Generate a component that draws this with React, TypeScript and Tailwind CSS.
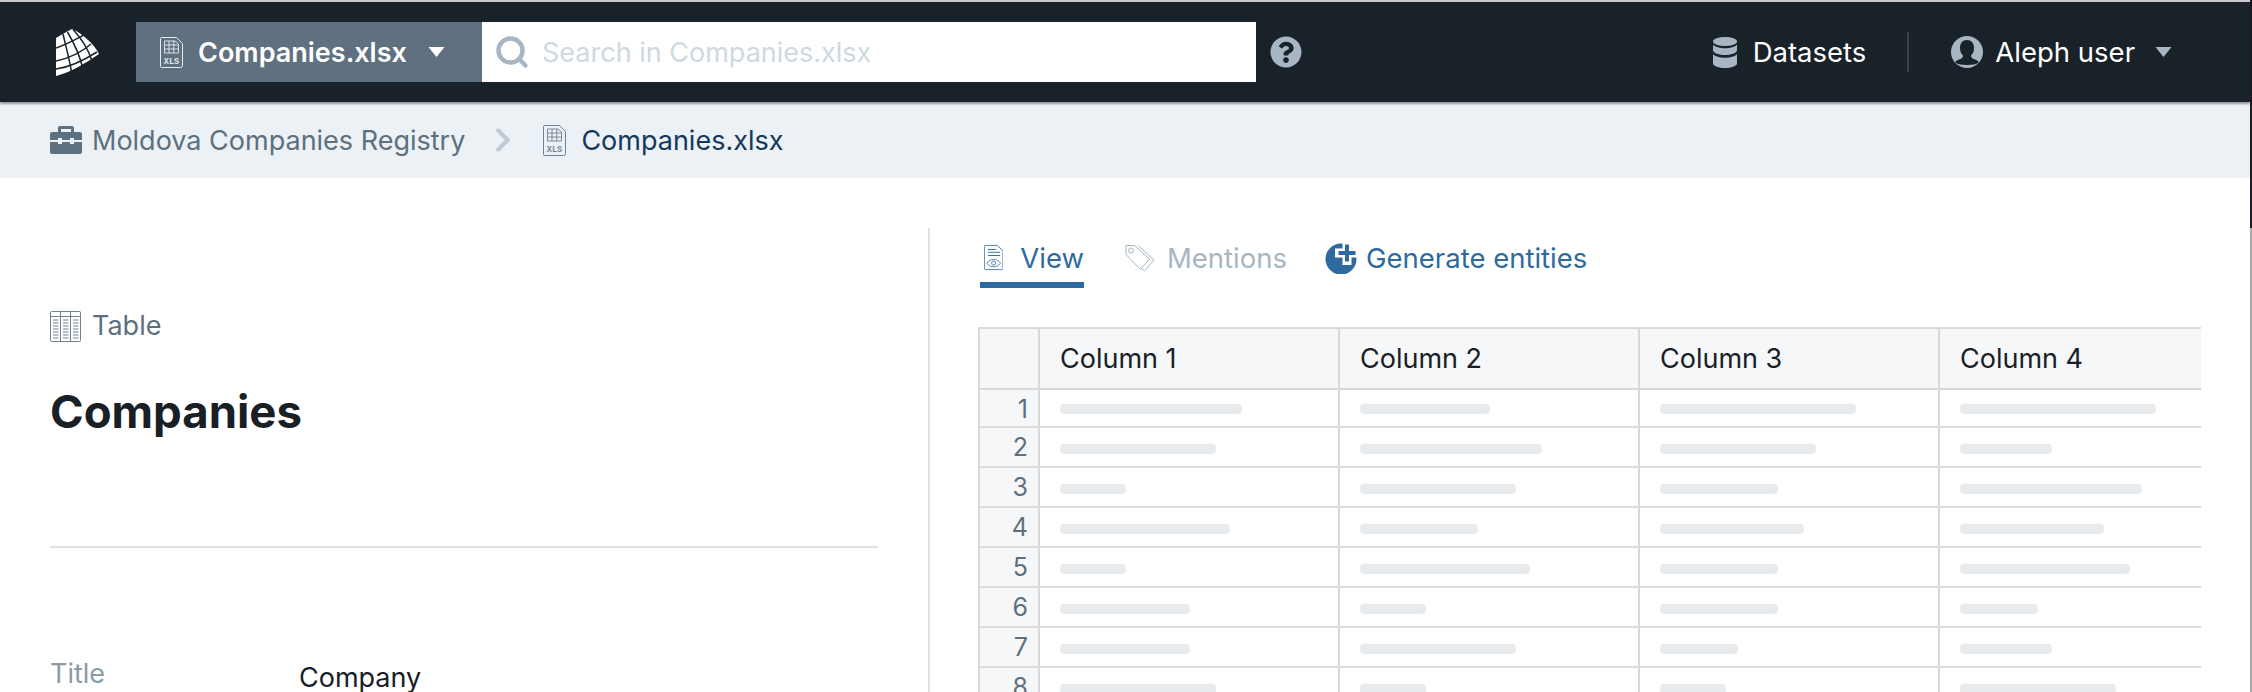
import { Search, ChevronRight } from "lucide-react";
import { FaQuestionCircle } from "react-icons/fa";

const columns = [
  { name: "Column 1", bars: [182, 156, 66, 170, 66, 130, 130, 156] },
  { name: "Column 2", bars: [130, 182, 156, 118, 170, 66, 156, 66] },
  { name: "Column 3", bars: [196, 156, 118, 144, 118, 118, 78, 66] },
  { name: "Column 4", bars: [196, 92, 182, 144, 170, 78, 92, 156] },
];

function XlsIcon({ className }: { className: string }) {
  return (
    <svg viewBox="0 0 23 31" className={className} fill="none" stroke="currentColor" strokeWidth="1">
      <path d="M1.500 0.500h15l6 6v22a2 2 0 0 1-2 2h-19a1 1 0 0 1-1-1v-28a1 1 0 0 1 1-1z" />
      <path d="M4.500 4h10.500l3.500 3v9h-14z M4.500 8h14 M4.500 12h14 M9 4v12 M13.750 4v12" strokeWidth="0.9" />
      <text x="11.500" y="27" textAnchor="middle" fontSize="8.500" fontWeight="700" stroke="none" fill="currentColor" className="[font-family:'Liberation_Mono',monospace]">
        XLS
      </text>
    </svg>
  );
}

function Logo() {
  return (
    <svg viewBox="0 0 43 47" className="w-[43px] h-[47px] text-white">
      <path d="M0 9 C5 6 10 3 16 0 C27 5 38 15 43 25 C30 34 15 43 0 47 Z" fill="currentColor" />
      <g fill="none" stroke="#1a2229" strokeWidth="1.500">
        <path d="M7 5 C10 18 14 32 16 46" />
        <path d="M11.500 3 C18 14 24 27 27 40" />
        <path d="M17 0.500 C25 9 32 19 36 32" />
        <path d="M0 19 C12 15 22 9 28 6" />
        <path d="M0 32 C14 29 27 22 35 15" />
        <path d="M0 40 C15 38 30 30 41 23" />
      </g>
    </svg>
  );
}

function DatabaseIcon() {
  return (
    <svg viewBox="0 0 24 31" className="w-6 h-[31px] text-[#a7b6c2]" fill="currentColor">
      <ellipse cx="12" cy="4.500" rx="12" ry="4.500" />
      <path d="M0 7.500c2 2.700 7 3.700 12 3.700s10-1 12-3.700v6c-1 2.800-6 4.500-12 4.500s-11-1.700-12-4.500z" />
      <path d="M0 17c2 2.700 7 3.700 12 3.700s10-1 12-3.700v9.500c0 2.700-6 4.500-12 4.500s-12-1.800-12-4.500z" />
    </svg>
  );
}

function UserIcon() {
  return (
    <svg viewBox="0 0 32 32" className="w-8 h-8">
      <circle cx="16" cy="16" r="16" fill="#a7b6c2" />
      <path d="M16 4c-4.500 0-7 3.500-7 8 0 3 1 6 3 7.500 0 2-1 3-3.500 3.800-2.200.8-3.700 1.700-4.300 3.200 2.500 1.800 7 2.500 11.800 2.500s9.300-.7 11.800-2.500c-.6-1.500-2.100-2.400-4.300-3.200-2.500-.8-3.500-1.800-3.500-3.800 2-1.500 3-4.500 3-7.500 0-4.500-2.500-8-7-8z" fill="#1a2229" />
    </svg>
  );
}

function BriefcaseIcon() {
  return (
    <svg viewBox="0 0 32 28" className="w-8 h-7 text-[#5c7080]" fill="currentColor">
      <path d="M10 0h12a2 2 0 0 1 2 2v4h6a2 2 0 0 1 2 2v6h-8v-2h-4v2h-8v-2H8v2H0V8a2 2 0 0 1 2-2h6V2a2 2 0 0 1 2-2zm1 3v3h10V3z" fillRule="evenodd" />
      <path d="M0 16h8v2h4v-2h8v2h4v-2h8v10a2 2 0 0 1-2 2H2a2 2 0 0 1-2-2z" />
    </svg>
  );
}

function TableIcon() {
  return (
    <svg viewBox="0 0 31 31" className="w-[31px] h-[31px] text-[#6f8294]" fill="none" stroke="currentColor" strokeWidth="1">
      <rect x="0.500" y="0.500" width="30" height="30" rx="1" />
      <path d="M0.500 5.500h30 M10.500 0.500v30 M20.500 0.500v30" />
      <path d="M3 9h5.500 M3 12h5.500 M3 15h5.500 M3 18h5.500 M3 21h5.500 M3 24h5.500 M3 27h5.500 M13 9h5.500 M13 12h5.500 M13 15h5.500 M13 18h5.500 M13 21h5.500 M13 24h5.500 M13 27h5.500 M23 9h5.500 M23 12h5.500 M23 15h5.500 M23 18h5.500 M23 21h5.500 M23 24h5.500 M23 27h5.500" />
    </svg>
  );
}

function ViewIcon() {
  return (
    <svg viewBox="0 0 24 31" className="w-6 h-[31px] text-[#2e6a9e]" fill="none" stroke="currentColor" strokeWidth="1">
      <path d="M1.500 0.500h15l7 6.500v22a1.500 1.500 0 0 1-1.500 1.500h-20.500a1 1 0 0 1-1-1v-28a1 1 0 0 1 1-1z" />
      <path d="M5 5.500h10 M5 9h15 M5 13h15" strokeWidth="1.200" />
      <path d="M3.500 22.500c2.500-3.500 5.500-4.500 8.500-4.500s6 1 8.500 4.500c-2.500 3.500-5.500 4.500-8.500 4.500s-6-1-8.500-4.500z" />
      <circle cx="12" cy="22.500" r="2.500" />
    </svg>
  );
}

function TagIcon() {
  return (
    <svg viewBox="0 0 30 28" className="mt-[2px] w-[30px] h-7 text-[#a7b6c2]" fill="none" stroke="currentColor" strokeWidth="1">
      <path d="M1 1.500h8.500l15 13.500-9 10.500-14.500-15z" strokeLinejoin="round" />
      <path d="M13 1.500l16 14.500-9.500 11-3-2.800" strokeLinejoin="round" />
      <circle cx="6" cy="6.500" r="2.500" />
    </svg>
  );
}

function GenerateIcon() {
  return (
    <svg viewBox="0 0 32 32" className="w-8 h-8">
      <circle cx="16" cy="17" r="15.500" fill="#2e6a9e" />
      <path d="M22 -2v25 M10 11h25" stroke="#ffffff" strokeWidth="9" />
      <path d="M22 2.500v17 M13.500 11h17" stroke="#2e6a9e" strokeWidth="4" />
    </svg>
  );
}

function Caret({ className }: { className: string }) {
  return (
    <svg viewBox="0 0 17 10" className={className} fill="currentColor">
      <path d="M0.500 0h16l-8 10z" />
    </svg>
  );
}

function Navbar() {
  return (
    <nav className="relative z-10 h-[102px] shrink-0 bg-[#1a2229] border-t-2 border-[#c9c9c9] shadow-[0_2px_2px_rgba(16,22,26,0.4)] flex items-center">
      <div className="ml-[56px] w-[80px]">
        <Logo />
      </div>
      <div className="w-[346px] h-[60px] bg-[#5f7080] flex items-center pl-6 text-white">
        <XlsIcon className="w-[23px] h-[31px] text-[#e6ebef]" />
        <span className="ml-[15px] mt-[2px] text-[27px] font-semibold">Companies.xlsx</span>
        <Caret className="ml-[21px] w-[17px] h-[10px]" />
      </div>
      <div className="w-[774px] h-[60px] bg-white flex items-center pl-[12px]">
        <Search className="w-[36px] h-[36px] text-[#a7b6c2]" strokeWidth={3} />
        <span className="ml-[12px] mt-[2px] text-[27px] text-[#ced9e0]">Search in Companies.xlsx</span>
      </div>
      <FaQuestionCircle className="ml-[14px] w-8 h-8 text-[#a7b6c2]" />
      <div className="ml-auto flex items-center text-white text-[27.500px]">
        <DatabaseIcon />
        <span className="ml-[16px] mt-[2px]">Datasets</span>
        <div className="ml-[41px] mr-[42px] w-[2px] h-[40px] bg-[#36434e]" />
        <UserIcon />
        <span className="ml-[12px] mt-[2px]">Aleph user</span>
        <Caret className="ml-[20px] mr-[78px] w-[17px] h-[10px] text-[#a7b6c2]" />
      </div>
    </nav>
  );
}

function Breadcrumbs() {
  return (
    <div className="h-[76px] shrink-0 bg-[#ebf1f5] flex items-center pl-[50px] text-[27px]">
      <BriefcaseIcon />
      <span className="ml-[10px] mt-[2px] text-[#5c7080]">Moldova Companies Registry</span>
      <ChevronRight className="ml-[19px] w-[38px] h-[38px] text-[#bfccd6]" strokeWidth={2.6} />
      <XlsIcon className="ml-[21px] w-[23px] h-[31px] text-[#6f8294]" />
      <span className="ml-[15px] mt-[2px] text-[#15395b]">Companies.xlsx</span>
    </div>
  );
}

function Metadata() {
  return (
    <div className="w-[928px] shrink-0 pl-[50px] pr-[50px] pt-[133px]">
      <div className="flex items-center h-[31px] text-[27px] text-[#5c7080]">
        <TableIcon />
        <span className="ml-[11px]">Table</span>
      </div>
      <h1 className="mt-[43px] text-[45.500px] leading-[54px] font-bold text-[#182026]">Companies</h1>
      <div className="mt-[107px] h-[2px] bg-[#dde3e8]" />
      <div className="mt-[108px] flex text-[27px] leading-[36px]">
        <span className="w-[249px] text-[#8a9ba8]">Title</span>
        <span className="mt-[4px] text-[#182026]">Company</span>
      </div>
    </div>
  );
}

function Tabs() {
  return (
    <div className="flex items-start h-[46px] text-[27.500px] leading-[32px]">
      <div className="w-[104px] h-[46px] border-b-[6px] border-[#2e6a9e] flex items-start pl-[4px] text-[#2e6a9e]">
        <ViewIcon />
        <span className="ml-[17px]">View</span>
      </div>
      <div className="ml-[41px] flex items-start text-[#a7b6c2]">
        <TagIcon />
        <span className="ml-3">Mentions</span>
      </div>
      <div className="ml-[38px] flex items-start text-[#2e6a9e]">
        <GenerateIcon />
        <span className="ml-[9px]">Generate entities</span>
      </div>
    </div>
  );
}

function PreviewTable() {
  return (
    <div className="mt-[39px] ml-[-2px] w-[1223px] border-t-2 border-l-2 border-[#d9d9da] overflow-hidden">
      <div className="flex h-[61px] border-b-2 border-[#d9d9da] bg-[#f6f7f9]">
        <div className="w-[60px] shrink-0 border-r-2 border-[#d9d9da]" />
        {columns.map((col) => (
          <div key={col.name} className="w-[300px] shrink-0 border-r-2 border-[#d9d9da] pl-[20px] pt-[2px] flex items-center text-[27px] text-[#182026]">
            {col.name}
          </div>
        ))}
      </div>
      {[0, 1, 2, 3, 4, 5, 6, 7].map((row) => (
        <div key={row} className={row === 0 ? "flex h-[38px] border-b-2 border-[#dcdcdc]" : "flex h-[40px] border-b-2 border-[#dcdcdc]"}>
          <div className="w-[60px] shrink-0 border-r-2 border-[#d9d9da] bg-[#f6f7f9] pr-[10px] text-right text-[25px] leading-[38px] text-[#5c7080]">
            {row + 1}
          </div>
          {columns.map((col) => (
            <div key={col.name} className={row === 0 ? "w-[300px] shrink-0 border-r-2 border-[#d9d9da] pl-[20px] pt-[14px]" : "w-[300px] shrink-0 border-r-2 border-[#d9d9da] pl-[20px] pt-[16px]"}>
              <div className="h-[10px] rounded bg-[#e8ebee]" style={{ width: col.bars[row] }} />
            </div>
          ))}
        </div>
      ))}
    </div>
  );
}

export default function App() {
  return (
    <div className="flex w-[2252px] h-[692px] overflow-hidden bg-white [font-family:Inter,sans-serif]">
      <div className="flex flex-col w-[2250px] shrink-0">
        <Navbar />
        <Breadcrumbs />
        <div className="flex flex-1 min-h-0">
          <Metadata />
          <div className="mt-[50px] flex-1 border-l-2 border-[#dde3e8] pl-[50px] pt-[14px] overflow-hidden">
            <Tabs />
            <PreviewTable />
          </div>
        </div>
      </div>
      <div className="flex flex-col w-[2px] shrink-0">
        <div className="h-[228px] bg-[#1c1d22]" />
        <div className="flex-1 bg-[#a9a9a9]" />
      </div>
    </div>
  );
}
